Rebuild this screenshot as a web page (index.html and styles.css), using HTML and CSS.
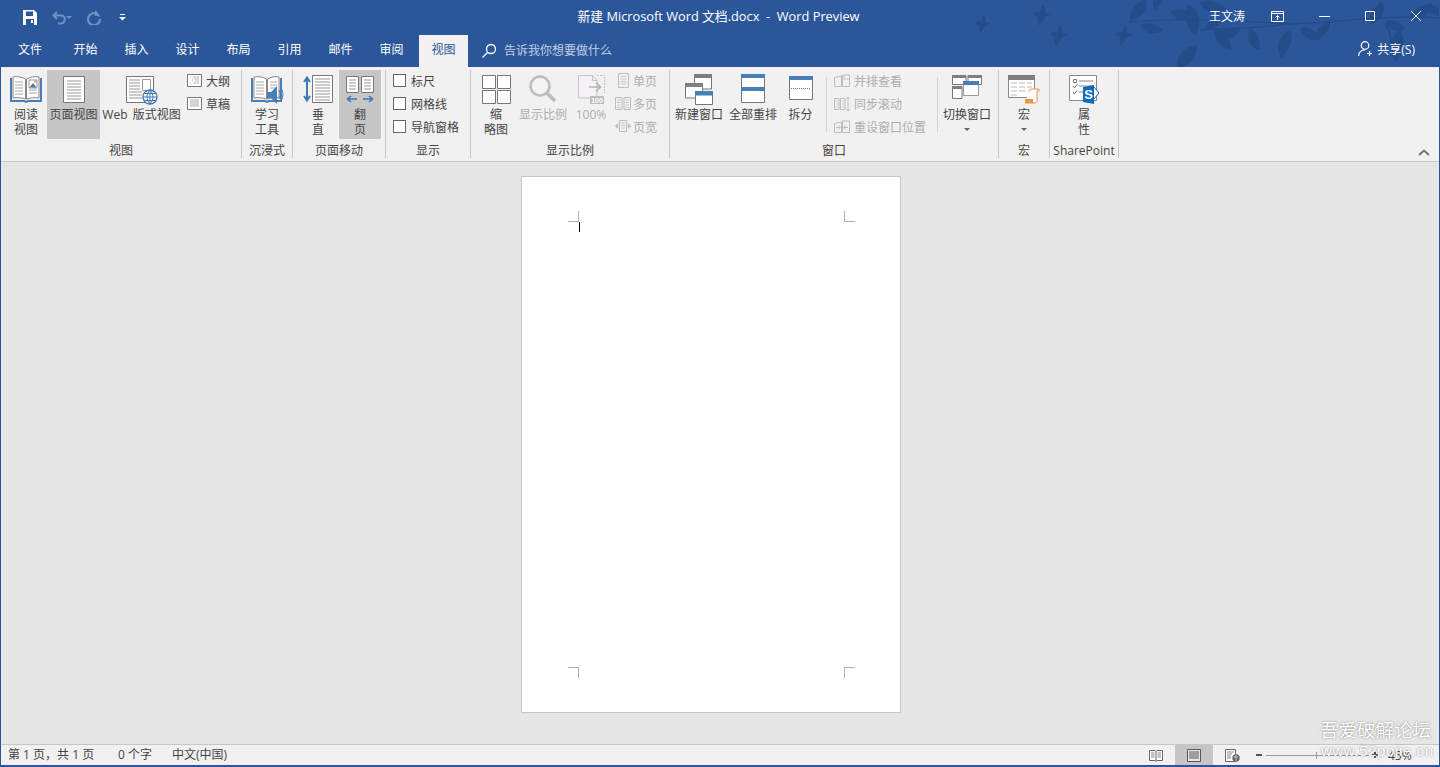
FILE: index.html
```html
<!DOCTYPE html>
<html>
<head>
    <title>新建 Microsoft Word 文档.docx - Word Preview</title>
    <link rel="stylesheet" href="styles.css">
</head>
<body>
<div class="app">
    <div class="header">
        <!-- background art: birds and leaves -->
        <svg class="art" width="490" height="67" viewBox="950 0 490 67">
            <defs>
                <path id="leaf" d="M0 0C5-7 15-9 26-6C22 3 10 7 0 0Z"/>
                <path id="bird" d="M0 0C3-4 7-3 9-2L13-12C17-9 17-4 16-1L24 1L17 3C15 8 10 10 9 16C6 12 6 8 7 5C4 3 2 2 0 0Z"/>
            </defs>
            <g class="art-shape">
                <use href="#bird" transform="translate(975 23) scale(.65)"/>
                <use href="#bird" transform="translate(1033 14) scale(.75)"/>
                <use href="#bird" transform="translate(1050 34) scale(.75)"/>
                <use href="#bird" transform="translate(1115 34) scale(.75)"/>
                <use href="#leaf" transform="translate(1130 20) rotate(-40) scale(1)"/>
                <use href="#leaf" transform="translate(1140 25) rotate(25) scale(.9)"/>
                <use href="#leaf" transform="translate(1155 10) rotate(-70) scale(.8)"/>
                <use href="#leaf" transform="translate(1170 12) rotate(20) scale(1)"/>
                <use href="#leaf" transform="translate(1195 35) rotate(-90) scale(1.2)"/>
                <use href="#leaf" transform="translate(1205 28) rotate(-15) scale(.7)"/>
                <use href="#leaf" transform="translate(1200 3) rotate(25) scale(1)"/>
                <use href="#leaf" transform="translate(1197 45) rotate(140) scale(1.200)"/>
                <use href="#leaf" transform="translate(1215 28) rotate(65) scale(1)"/>
                <use href="#leaf" transform="translate(1240 30) rotate(170) scale(1)"/>
                <use href="#leaf" transform="translate(1250 28) rotate(80) scale(.9)"/>
                <use href="#leaf" transform="translate(1290 30) rotate(120) scale(1.100)"/>
                <use href="#leaf" transform="translate(1300 28) rotate(40) scale(.9)"/>
                <use href="#leaf" transform="translate(1330 22) rotate(140) scale(.8)"/>
                <use href="#leaf" transform="translate(1370 25) rotate(-50) scale(1)"/>
                <use href="#leaf" transform="translate(1385 22) rotate(30) scale(.8)"/>
                <use href="#leaf" transform="translate(1400 30) rotate(110) scale(1.200)"/>
                <use href="#leaf" transform="translate(1410 18) rotate(-20) scale(1)"/>
                <use href="#leaf" transform="translate(1425 5) rotate(40) scale(.8)"/>
                <path d="M1130 22C1180 18 1230 20 1290 24C1340 22 1400 14 1440 18M1200 30C1215 28 1240 30 1290 24M1385 24C1395 38 1390 45 1385 50" fill="none" stroke="#234c88" stroke-width="1.500"/>
            </g>
        </svg>

        <div class="titlebar">
            <div class="qat">
                <svg width="14" height="15" viewBox="0 0 14 15"><path d="M0 0H11L14 3V15H0Z" fill="#fff"/><path d="M3 1.500H10V6H3ZM3 9H11V15H3Z" fill="#2b579a"/><path d="M8 10H10V13H8Z" fill="#fff"/></svg>
                <svg class="qat-undo" width="14" height="14" viewBox="0 0 14 14"><path d="M5 1L1.500 4.500L5 8M2 4.500H9C14 4.500 14 12 9 12.500H6" fill="none" stroke="#6f90c0" stroke-width="2"/></svg>
                <span class="caret caret-dim qat-undo-drop"></span>
                <svg class="qat-redo" width="14" height="15" viewBox="0 0 14 15"><path d="M10 4A6 6 0 1 0 13 9" fill="none" stroke="#6f90c0" stroke-width="2.200"/><path d="M8 0V6H14Z" fill="#6f90c0" transform="rotate(8 10 3)"/></svg>
                <svg class="qat-more" width="7" height="7" viewBox="0 0 7 7"><path d="M1 .5H6" stroke="#fff"/><path d="M0 3H7L3.500 6.500Z" fill="#fff"/></svg>
            </div>
            <div class="doc-title">新建 Microsoft Word 文档.docx&nbsp; - &nbsp;Word Preview</div>
            <div class="win-controls">
                <span class="user">王文涛</span>
                <svg class="ctl-display" width="13" height="11" viewBox="0 0 13 11"><path d="M.5.500H12.500V10.500H.5ZM.5 2.500H12.500" fill="none" stroke="#fff"/><path d="M6.500 9V5M4.500 6.500L6.500 4.500L8.500 6.500" fill="none" stroke="#fff"/></svg>
                <svg class="ctl-min" width="11" height="1" viewBox="0 0 11 1"><path d="M0 .5H11" stroke="#fff"/></svg>
                <svg class="ctl-max" width="10" height="10" viewBox="0 0 10 10"><path d="M.5.500H9.500V9.500H.5Z" fill="none" stroke="#fff"/></svg>
                <svg class="ctl-close" width="10" height="10" viewBox="0 0 10 10"><path d="M0 0L10 10M10 0L0 10" stroke="#fff"/></svg>
            </div>
        </div>

        <div class="tabbar">
            <div class="tab tab-file">文件</div>
            <div class="tab">开始</div>
            <div class="tab">插入</div>
            <div class="tab">设计</div>
            <div class="tab">布局</div>
            <div class="tab">引用</div>
            <div class="tab">邮件</div>
            <div class="tab">审阅</div>
            <div class="tab tab-active">视图</div>
            <div class="tell-me">
                <svg width="15" height="15" viewBox="0 0 15 15"><circle cx="9" cy="6" r="4.500" fill="none" stroke="#fff" stroke-width="1.300"/><path d="M5.500 9.500L.5 14.500" stroke="#fff" stroke-width="1.300"/></svg>
                <span>告诉我你想要做什么</span>
            </div>
            <div class="share">
                <svg width="15" height="15" viewBox="0 0 15 15"><circle cx="7" cy="4.500" r="3.800" fill="none" stroke="#fff" stroke-width="1.200"/><path d="M.5 15C1 10.500 4 9 7 9M11.500 10V15M9 12.500H14" fill="none" stroke="#fff" stroke-width="1.200"/></svg>
                <span>共享(S)</span>
            </div>
        </div>
    </div>

    <div class="ribbon">
        <!-- 视图 -->
        <div class="group g-view">
            <div class="tools">
                <div class="big w42">
                    <svg width="32" height="37" viewBox="0 0 32 37"><path d="M1 8V31H14L16 32L18 31H31V8" fill="none" stroke="#4a7eb8" stroke-width="2"/><path d="M3 7C7 6 12 7 15.500 9V29C12 28 7 27 3 28Z" fill="#fff" stroke="#888"/><path d="M29 7C25 6 20 7 16.500 9V29C20 28 25 27 29 28Z" fill="#fff" stroke="#888"/><path d="M5 12H13M5 15H13M5 18H13M5 21H13M5 24H13M19 20H27M19 23H27" stroke="#aaa"/><path d="M19 10H27V18H19Z" fill="#fff" stroke="#999"/><path d="M19.500 17.500L23 13L26.500 17.500Z" fill="#3f78b5"/><path d="M24 10.500H26.500V12.500H24Z" fill="#e9a04c"/></svg>
                    <span>阅读<br>视图</span>
                </div>
                <div class="big w53 on">
                    <svg width="22" height="37" viewBox="0 0 22 37"><path d="M.5 6.500H21.500V32.500H.5Z" fill="#fff" stroke="#777"/><path d="M4 11H18M4 14H18M4 17H18M4 20H18M4 23H18M4 26H18M4 29H18" stroke="#999"/></svg>
                    <span>页面视图</span>
                </div>
                <div class="big w83">
                    <svg width="32" height="37" viewBox="0 0 32 37"><path d="M.5 6.500H27.500V32.500H.5Z" fill="#fff" stroke="#777"/><path d="M3 10H14M3 13H14M3 16H14M3 19H14M3 22H16M3 25H16M3 28H16" stroke="#999"/><path d="M16.500 9.500H24.500V20.500H16.500Z" fill="#fff" stroke="#999"/><circle cx="24" cy="27" r="7" fill="#fff" stroke="#3f78b5" stroke-width="1.300"/><path d="M17 27H31M24 20V34M18.500 23.500H29.500M18.500 30.500H29.500M24 20C20 24 20 30 24 34C28 30 28 24 24 20" fill="none" stroke="#3f78b5"/></svg>
                    <span>Web 版式视图</span>
                </div>
                <div class="smalls g-view-smalls">
                    <div class="small">
                        <svg width="15" height="13" viewBox="0 0 15 13"><path d="M.5.500H14.500V12.500H.5Z" fill="#fff" stroke="#777"/><path d="M3 3H4M6 3H12M5 5H6M7 5H12M5 7H6M8 7H12M3 9H4M6 9H12" stroke="#bbb"/></svg>
                        <span>大纲</span>
                    </div>
                    <div class="small">
                        <svg width="15" height="13" viewBox="0 0 15 13"><path d="M.5.500H14.500V12.500H.5Z" fill="#fff" stroke="#777"/><path d="M3 3H12M3 5H12M3 7H12M3 9H12" stroke="#aaa"/></svg>
                        <span>草稿</span>
                    </div>
                </div>
            </div>
            <div class="label">视图</div>
        </div>

        <!-- 沉浸式 -->
        <div class="group g-immersive">
            <div class="tools">
                <div class="big wfull">
                    <svg width="33" height="37" viewBox="0 0 33 37"><path d="M1 8V31H14L16 32L18 31H30V8" fill="none" stroke="#4a7eb8" stroke-width="2"/><path d="M3 7C7 6 12 7 15.500 9V29C12 28 7 27 3 28Z" fill="#fff" stroke="#888"/><path d="M28 7C24 6 20 7 16.500 9V29C20 28 24 27 28 28Z" fill="#fff" stroke="#888"/><path d="M5 12H13M5 15H13M5 18H13M5 21H13M5 24H13M19 12H26M19 15H26M19 18H26" stroke="#aaa"/><path d="M16 22H20L26 16V34L20 28H16Z" fill="#4a7eb8"/><path d="M28 20C29.500 23 29.500 26 28 29M30 18C32.500 22 32.500 27 30 31" fill="none" stroke="#4a7eb8"/></svg>
                    <span>学习<br>工具</span>
                </div>
            </div>
            <div class="label">沉浸式</div>
        </div>

        <!-- 页面移动 -->
        <div class="group g-move">
            <div class="tools">
                <div class="big w42">
                    <svg width="30" height="37" viewBox="0 0 30 37"><path d="M4 9V29M1 12L4 7.500L7 12M1 26L4 30.500L7 26" fill="none" stroke="#3f78b5" stroke-width="2"/><path d="M9.500 5.500H29.500V32.500H9.500Z" fill="#fff" stroke="#777"/><path d="M12 9H27M12 12H27M12 15H27M12 18H27M12 21H27M12 24H27M12 27H27M12 30H27" stroke="#999"/></svg>
                    <span>垂<br>直</span>
                </div>
                <div class="big w42 on">
                    <svg width="28" height="37" viewBox="0 0 28 37"><path d="M.5 6.500H12.500V22.500H.5ZM15.500 6.500H27.500V22.500H15.500Z" fill="#fff" stroke="#777"/><path d="M3 10H10M3 13H10M3 16H10M3 19H10M18 10H25M18 13H25M18 16H25M18 19H25" stroke="#999"/><path d="M2 29H11M5 26L1.500 29L5 32M17 29H26M23 26L26.500 29L23 32" fill="none" stroke="#3f78b5" stroke-width="1.600"/></svg>
                    <span>翻<br>页</span>
                </div>
            </div>
            <div class="label">页面移动</div>
        </div>

        <!-- 显示 -->
        <div class="group g-show">
            <div class="tools">
                <div class="smalls checks">
                    <div class="check"><i></i><span>标尺</span></div>
                    <div class="check"><i></i><span>网格线</span></div>
                    <div class="check"><i></i><span>导航窗格</span></div>
                </div>
            </div>
            <div class="label">显示</div>
        </div>

        <!-- 显示比例 -->
        <div class="group g-zoom">
            <div class="tools">
                <div class="big w42">
                    <svg width="29" height="37" viewBox="0 0 29 37"><path d="M.5 5.500H13.500V18.500H.5ZM15.500 5.500H28.500V18.500H15.500ZM.5 20.500H13.500V33.500H.5ZM15.500 20.500H28.500V33.500H15.500Z" fill="#fff" stroke="#777"/></svg>
                    <span>缩<br>略图</span>
                </div>
                <div class="big w52 off">
                    <svg width="28" height="37" viewBox="0 0 28 37"><circle cx="11" cy="16" r="9.500" fill="#f6f1f6" stroke="#bdbdbd" stroke-width="2.500"/><path d="M18 23L26 31" stroke="#bdbdbd" stroke-width="3.500"/></svg>
                    <span>显示比例</span>
                </div>
                <div class="big w44 off">
                    <svg width="27" height="37" viewBox="0 0 27 37"><path d="M.5 5.500H14.500L19 10V28H.5Z" fill="#f6f1f6" stroke="#c4c4c4"/><path d="M14.500 5.500V10.500H19" fill="none" stroke="#c4c4c4"/><path d="M19 5.500H26.500V23" fill="none" stroke="#c4c4c4" stroke-dasharray="2 1"/><path d="M11 17H22M18 12.500L22.500 17L18 21.500" fill="none" stroke="#b5b5b5" stroke-width="1.700"/><rect x="12" y="26" width="14" height="8" fill="#bdbdbd"/><text x="19" y="33" class="svg-tag">100</text></svg>
                    <span>100%</span>
                </div>
                <div class="smalls off g-zoom-smalls">
                    <div class="small">
                        <svg width="16" height="15" viewBox="0 0 16 15"><path d="M3.500 .5H13.500V14.500H3.500Z" fill="none" stroke="#bdbdbd"/><path d="M5.500 3.500H11.500M5.500 6H11.500M5.500 8.500H11.500M5.500 11H11.500" stroke="#c8c8c8"/></svg>
                        <span>单页</span>
                    </div>
                    <div class="small">
                        <svg width="16" height="15" viewBox="0 0 16 15"><path d="M.5 1.500H7V13.500H.5ZM9 1.500H15.500V13.500H9Z" fill="none" stroke="#bdbdbd"/><path d="M2 4H5.500M2 6.500H5.500M2 9H5.500M2 11.500H5.500M10.500 4H14M10.500 6.500H14M10.500 9H14M10.500 11.500H14" stroke="#c8c8c8"/></svg>
                        <span>多页</span>
                    </div>
                    <div class="small">
                        <svg width="16" height="15" viewBox="0 0 16 15"><path d="M4.500 1.500H11.500V12.500H4.500Z" fill="none" stroke="#bdbdbd"/><path d="M6 4H10M6 6.500H10M6 9H10" stroke="#c8c8c8"/><path d="M0 7L3 4V10ZM16 7L13 4V10Z" fill="#bdbdbd"/></svg>
                        <span>页宽</span>
                    </div>
                </div>
            </div>
            <div class="label">显示比例</div>
        </div>

        <!-- 窗口 -->
        <div class="group g-window">
            <div class="tools">
                <div class="big w54 first">
                    <svg width="28" height="37" viewBox="0 0 28 37"><path d="M9.500 4.500H26.500V19H9.500Z" fill="#fff" stroke="#777"/><rect x="9" y="4" width="18" height="4" fill="#7f7f7f"/><path d="M.5 13.500H17.500V28H.5Z" fill="#fff" stroke="#777"/><rect y="13" width="18" height="4" fill="#7f7f7f"/><path d="M10.500 21.500H27.500V34.500H10.500Z" fill="#fff" stroke="#777"/><rect x="10" y="21" width="18" height="4.500" fill="#4a7eb8"/></svg>
                    <span>新建窗口</span>
                </div>
                <div class="big w54">
                    <svg width="24" height="37" viewBox="0 0 24 37"><path d="M.5 4.500H23.500V32.500H.5Z" fill="#fff" stroke="#777"/><rect width="24" height="4" y="4" fill="#4a7eb8"/><rect width="24" height="4" y="17" fill="#4a7eb8"/></svg>
                    <span>全部重排</span>
                </div>
                <div class="big w41">
                    <svg width="24" height="37" viewBox="0 0 24 37"><path d="M.5 6.500H23.500V29.500H.5Z" fill="#fff" stroke="#777"/><rect width="24" height="4" y="6" fill="#4a7eb8"/><path d="M2 18.500H22" stroke="#4a7eb8" stroke-dasharray="1 1"/></svg>
                    <span>拆分</span>
                </div>
                <div class="vline"></div>
                <div class="smalls off g-window-smalls">
                    <div class="small">
                        <svg width="16" height="14" viewBox="0 0 16 14"><path d="M.5 3.500L7.500 2V12.500H.5ZM8.500 1H15.500V12.500H8.500Z" fill="none" stroke="#bdbdbd"/><path d="M10 1V5H15" fill="none" stroke="#c8c8c8"/></svg>
                        <span>并排查看</span>
                    </div>
                    <div class="small">
                        <svg width="16" height="16" viewBox="0 0 16 16"><path d="M.5 2.500H5V13.500H.5ZM6.500 2.500H11V13.500H6.500Z" fill="none" stroke="#bdbdbd"/><path d="M2 5H4M2 8H4M2 11H4M8 5H10M8 8H10M8 11H10" stroke="#c8c8c8"/><path d="M14 1V15M12.500 3L14 1L15.500 3M12.500 13L14 15L15.500 13" fill="none" stroke="#bdbdbd"/></svg>
                        <span>同步滚动</span>
                    </div>
                    <div class="small">
                        <svg width="16" height="14" viewBox="0 0 16 14"><path d="M.5 3.500L7.500 2V12.500H.5ZM8.500 1H15.500V12.500H8.500Z" fill="none" stroke="#bdbdbd"/><path d="M2 7.500H6M4.500 5.500L6.500 7.500L4.500 9.500M14 7.500H10M11.500 5.500L9.500 7.500L11.500 9.500" fill="none" stroke="#bdbdbd"/></svg>
                        <span>重设窗口位置</span>
                    </div>
                </div>
                <div class="vline vline-2"></div>
                <div class="big w58">
                    <svg width="30" height="37" viewBox="0 0 30 37"><path d="M.5 5.500H14V14.500H.5ZM16 5.500H29.500V14.500H16ZM.5 16.500H10V28.500H.5Z" fill="#fff" stroke="#777"/><rect width="14" height="3" y="5" fill="#7f7f7f"/><rect x="16" width="14" height="3" y="5" fill="#7f7f7f"/><rect width="10" height="3" y="16" fill="#7f7f7f"/><path d="M11.500 11.500H26.500V25.500H11.500Z" fill="#fff" stroke="#999"/><rect x="11" y="11" width="16" height="4" fill="#4a7eb8"/></svg>
                    <span>切换窗口<b class="caret"></b></span>
                </div>
            </div>
            <div class="label">窗口</div>
        </div>

        <!-- 宏 -->
        <div class="group g-macro">
            <div class="tools">
                <div class="big wfull">
                    <svg width="32" height="37" viewBox="0 0 32 37"><path d="M.5 5.500H26.500V27.500H.5Z" fill="#fff" stroke="#888"/><rect width="27" height="5" y="5" fill="#7f7f7f"/><path d="M3 13H9M11 13H17M19 13H24M3 17H9M11 17H17M19 17H24M3 21H9M11 21H17M3 25H9" stroke="#bbb"/><path d="M21 22C21 20 22 19 24 19H31V21H29V31C29 32 28 33 27 33H17" fill="#fff" stroke="#e8964a"/><path d="M17 29H25V33H17Z" fill="#e8964a"/></svg>
                    <span>宏<b class="caret"></b></span>
                </div>
            </div>
            <div class="label">宏</div>
        </div>

        <!-- SharePoint -->
        <div class="group g-sp">
            <div class="tools">
                <div class="big wfull">
                    <svg width="30" height="37" viewBox="0 0 30 37"><path d="M.5 5.500H27.500V30.500H.5Z" fill="#fff" stroke="#888"/><path d="M4.500 9.500H7.500V12.500H4.500Z" fill="none" stroke="#777"/><path d="M10 11H24M10 16H24M10 22H14" stroke="#888"/><path d="M4 16L5.500 18L8 14.500M4 22L5.500 24L8 20.500" fill="none" stroke="#777"/><path d="M22 17H25L30 23L25 29H22Z" fill="#fff" stroke="#0f5fa8"/><path d="M14 17L25 15V34L14 32Z" fill="#0f6cbd"/><text x="19.500" y="29" class="svg-s">S</text></svg>
                    <span>属<br>性</span>
                </div>
            </div>
            <div class="label">SharePoint</div>
        </div>

        <svg class="collapse" width="12" height="7" viewBox="0 0 12 7"><path d="M1 6L6 1.500L11 6" fill="none" stroke="#777" stroke-width="2"/></svg>
    </div>

    <div class="workspace">
        <div class="page">
            <div class="marks">
                <span class="mark mark-tl"><i class="cursor"></i></span>
                <span class="mark mark-tr"></span>
            </div>
            <div class="marks">
                <span class="mark mark-bl"></span>
                <span class="mark mark-br"></span>
            </div>
        </div>
    </div>

    <div class="statusbar">
        <span class="st-pages">第 1 页，共 1 页</span>
        <span class="st-words">0 个字</span>
        <span class="st-lang">中文(中国)</span>
        <div class="st-right">
            <svg class="st-read" width="14" height="13" viewBox="0 0 14 13"><path d="M.5 1.500H6L7 2.500L8 1.500H13.500V11.500H8L7 12.500L6 11.500H.5ZM7 2.500V12" fill="#fff" stroke="#666"/><path d="M2 4H5.500M2 6H5.500M2 8H5.500M8.500 4H12M8.500 6H12M8.500 8H12" stroke="#888"/></svg>
            <div class="st-print">
                <svg width="14" height="13" viewBox="0 0 14 13"><path d="M.5.500H13.500V12.500H.5Z" fill="#e8e8e8" stroke="#555"/><path d="M2 3H12M2 5H12M2 7H12M2 9H12" stroke="#555"/></svg>
            </div>
            <svg class="st-web" width="15" height="13" viewBox="0 0 15 13"><path d="M.5.500H10.500V12.500H.5Z" fill="#fff" stroke="#666"/><path d="M2 3H9M2 5H7M2 7H6M2 9H6" stroke="#888"/><circle cx="11" cy="9" r="3.700" fill="#666"/><path d="M8.500 8H13M11 6V12" stroke="#fff" stroke-width=".6"/></svg>
            <span class="st-minus"></span>
            <div class="st-slider"><i></i></div>
            <span class="st-plus"></span>
            <span class="st-zoom">45%</span>
        </div>
    </div>

    <div class="watermark">
        <div class="wm-name">吾爱破解论坛</div>
        <div class="wm-url">www.52pojie.cn</div>
    </div>
</div>
</body>
</html>
```

FILE: styles.css
```css
html, body { margin: 0; padding: 0; }
body { font-family: "Open Sans", "Noto Sans CJK SC", sans-serif; font-size: 12px; color: #444; overflow: hidden; }
svg { display: block; flex: none; }

.app { position: relative; width: 1440px; height: 767px; box-sizing: border-box; display: flex; flex-direction: column; background: #e6e6e6; border: 1px solid #2b579a; border-width: 0 1px 2px; overflow: hidden; }

/* header */
.header { height: 67px; margin: 0 -1px; background: #2b579a; position: relative; color: #fff; flex: none; }
.art { position: absolute; left: 0; top: 0; margin-left: 950px; }
.art-shape { fill: #234c88; }

.titlebar { height: 35px; position: relative; display: flex; align-items: center; }
.qat { width: 460px; padding-left: 23px; box-sizing: border-box; display: flex; align-items: center; }
.qat-undo { margin-left: 15px; }
.qat-undo-drop { margin-left: 6px; }
.qat-redo { margin-left: 15px; }
.qat-more { margin-left: 18px; }
.doc-title { width: 517px; margin-bottom: 4px; font-size: 12.800px; text-align: center; white-space: nowrap; }
.win-controls { flex: 1; margin-bottom: 3px; display: flex; align-items: center; }
.user { margin-left: 232px; font-size: 12px; }
.ctl-display { margin-left: 26px; }
.ctl-min { margin-left: 35px; }
.ctl-max { margin-left: 35px; }
.ctl-close { margin-left: 36px; }

.tabbar { height: 32px; position: relative; display: flex; }
.tab { width: 51px; text-align: center; line-height: 30px; }
.tab-file { width: 60px; }
.tab-active { width: 49px; margin-left: 2px; background: #f1f1f1; color: #2b579a; }
.tell-me { margin-left: 14px; display: flex; align-items: center; gap: 7px; color: #c3d0e4; height: 30px; }
.share { margin-left: auto; margin-right: 25px; display: flex; align-items: center; gap: 4px; height: 27px; }

/* ribbon */
.ribbon { height: 95px; box-sizing: border-box; padding-top: 3px; background: #f1f1f1; border-bottom: 1px solid #c6c6c6; display: flex; flex: none; position: relative; }
.group { box-sizing: border-box; height: 88px; border-right: 1px solid #c6c6c6; display: flex; flex-direction: column; }
.g-view { width: 241px; }
.g-immersive { width: 51px; }
.g-move { width: 93px; }
.g-show { width: 85px; }
.g-zoom { width: 199px; }
.g-window { width: 329px; }
.g-macro { width: 51px; }
.g-sp { width: 69px; }
.tools { height: 69px; display: flex; padding-left: 4px; }
.g-immersive .tools, .g-macro .tools, .g-sp .tools { padding-left: 0; }
.label { height: 18px; line-height: 24px; text-align: center; white-space: nowrap; }

.big { height: 69px; display: flex; flex-direction: column; align-items: center; text-align: center; line-height: 15px; white-space: nowrap; flex: none; }
.big span { display: block; }
.big.on { background: #c6c6c6; }
.wfull { width: 100%; }
.w41 { width: 41px; }
.w42 { width: 42px; }
.w44 { width: 44px; }
.w52 { width: 52px; }
.w53 { width: 53px; }
.w54 { width: 54px; }
.w58 { width: 58px; }
.w83 { width: 83px; word-spacing: 2px; }
.first { margin-left: -2px; }
.off { color: #adadad; }

.smalls { display: flex; flex-direction: column; margin-top: -1px; }
.small { height: 23px; display: flex; align-items: center; gap: 4px; white-space: nowrap; }
.g-view-smalls { margin-left: 4px; }
.g-zoom-smalls { margin-left: 2px; }
.g-zoom-smalls .small { gap: 2px; }
.g-window-smalls { margin-left: 7px; }
.checks { margin-left: 3px; }
.check { height: 23px; display: flex; align-items: center; gap: 5px; white-space: nowrap; }
.check i { display: block; box-sizing: border-box; width: 13px; height: 13px; background: #fff; border: 1px solid #666; }

.vline { width: 1px; height: 55px; margin: 7px 0 0 5px; background: #d4d4d4; flex: none; }
.vline-2 { margin-left: 11px; margin-right: 0; }

.caret { display: block; width: 0; height: 0; margin: 6px auto 0; border: 3px solid transparent; border-top-color: #666; border-bottom-width: 0; }
.caret-dim { margin: 0; border-top-color: #6f90c0; }
.svg-tag { font: bold 7px "Liberation Sans", sans-serif; fill: #fff; text-anchor: middle; }
.svg-s { font: bold 13px "Liberation Sans", sans-serif; fill: #fff; text-anchor: middle; }
.collapse { margin: 79px 0 0 299px; }

/* document area */
.workspace { flex: 1; padding-top: 14px; }
.page { box-sizing: border-box; width: 380px; height: 537px; margin-left: 520px; padding: 34px 45px 34px 46px; background: #fff; border: 1px solid #c6c6c6; display: flex; flex-direction: column; justify-content: space-between; }
.marks { display: flex; justify-content: space-between; }
.mark { position: relative; display: block; box-sizing: border-box; width: 11px; height: 11px; border: 0 solid #b0b0b0; }
.mark-tl { border-right-width: 1px; border-bottom-width: 1px; }
.mark-tr { border-left-width: 1px; border-bottom-width: 1px; }
.mark-bl { border-right-width: 1px; border-top-width: 1px; }
.mark-br { border-left-width: 1px; border-top-width: 1px; }
.cursor { position: absolute; left: 11px; top: 11px; width: 1px; height: 10px; background: #000; }

/* status bar */
.statusbar { height: 21px; box-sizing: border-box; background: #f1f1f1; border-top: 1px solid #c6c6c6; display: flex; align-items: center; flex: none; white-space: nowrap; }
.statusbar > span { position: relative; bottom: 1px; }
.st-pages { margin-left: 7px; width: 110px; }
.st-words { width: 54px; }
.st-right { margin-left: auto; height: 100%; display: flex; align-items: center; }
.st-print { width: 38px; height: 100%; background: #c6c6c6; display: flex; align-items: center; justify-content: center; margin-left: 12px; }
.st-web { margin-left: 12px; }
.st-minus { width: 6px; height: 2px; background: #555; margin-left: 16px; }
.st-slider { position: relative; width: 104px; height: 1px; margin-left: 4px; background: #999; }
.st-slider i { position: absolute; left: 50px; top: -3px; width: 1px; height: 7px; background: #999; }
.st-plus { position: relative; width: 6px; height: 2px; background: #555; margin-left: 2px; }
.st-plus::after { content: ""; position: absolute; left: 2px; top: -2px; width: 2px; height: 6px; background: #555; }
.st-zoom { width: 25px; margin: 0 26px 0 10px; }

/* watermark sits over the status bar */
.watermark { position: absolute; left: 1319px; top: 716px; color: #fff; text-shadow: 0 0 2px rgba(80,80,80,.75); white-space: nowrap; }
.wm-name { font-size: 18.500px; line-height: 26px; font-family: "Noto Sans CJK SC", sans-serif; }
.wm-url { font-size: 15px; line-height: 18px; letter-spacing: .6px; font-family: "Liberation Sans", sans-serif; margin-left: 1px; }
```
